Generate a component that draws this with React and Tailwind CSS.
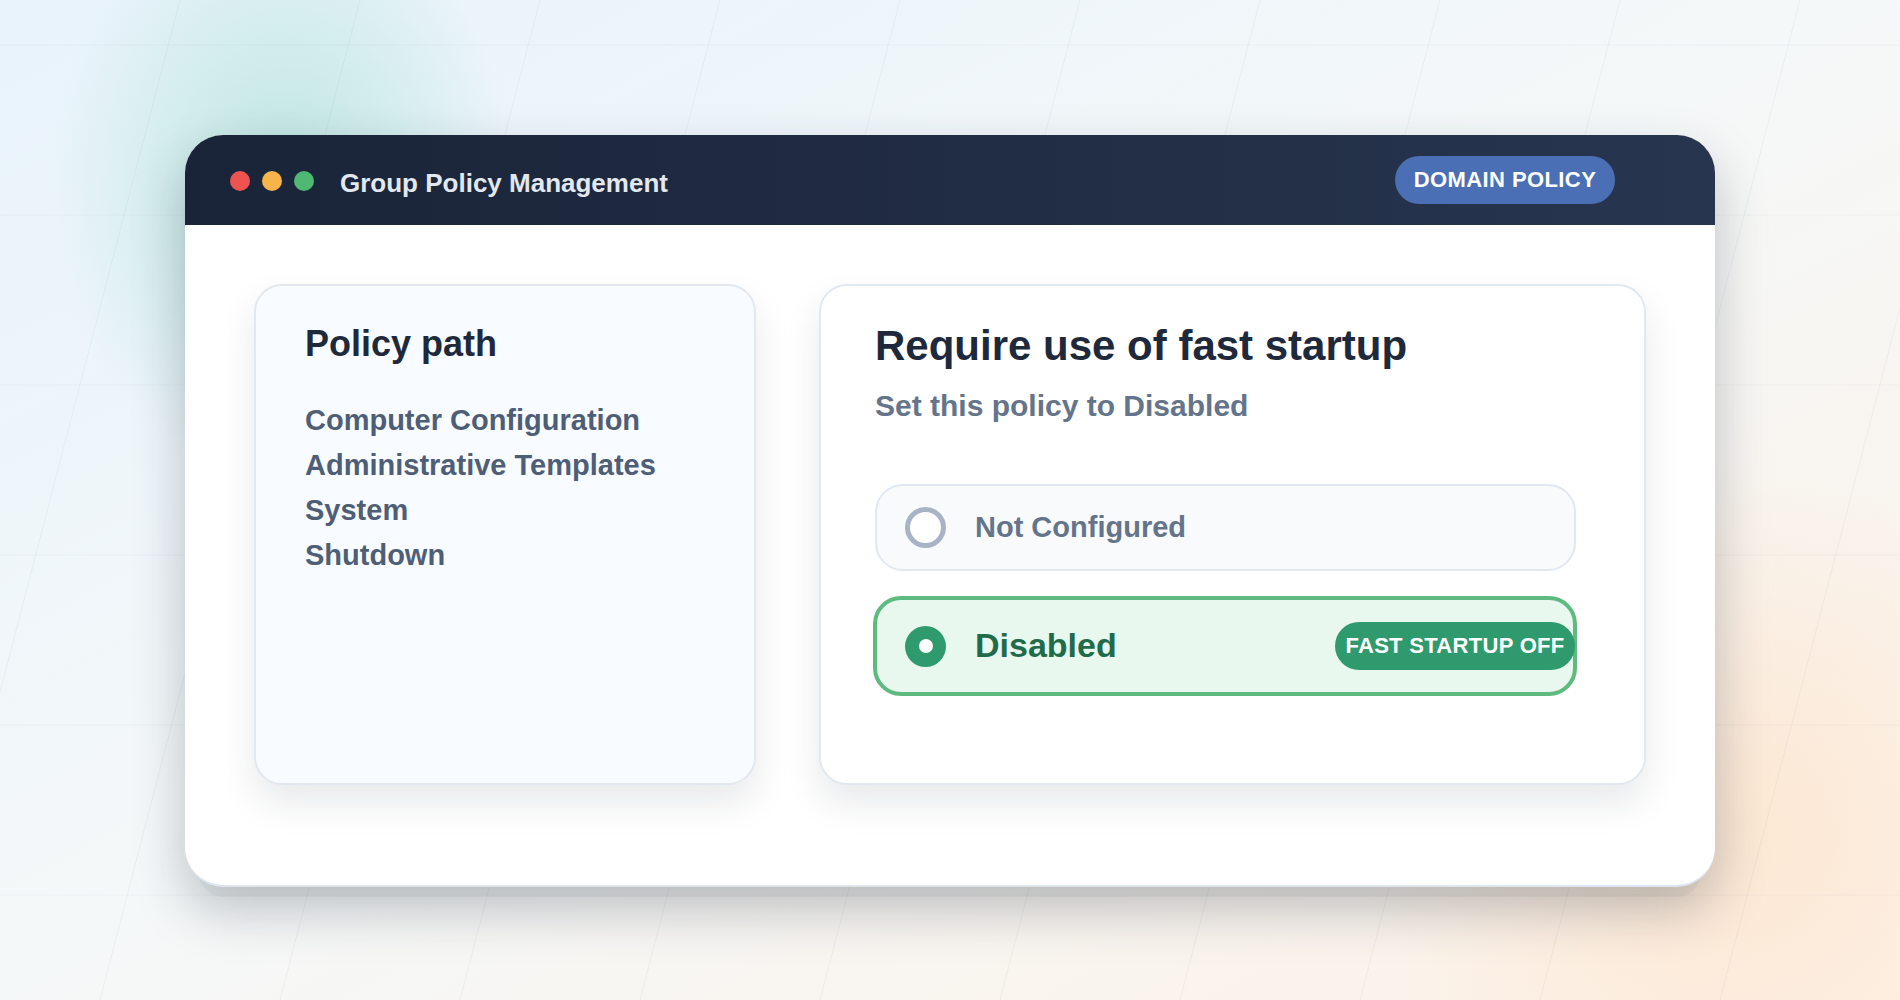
import * as React from 'react'

const FONT = "[font-family:'Liberation_Sans',Arial,sans-serif]"

// decorative slanted grid behind the window
function GridLines() {
  const slanted = Array.from({ length: 13 }, (_, i) => 180 * (i + 1))
  const flat = [45, 215, 385, 555, 725, 895]
  return (
    <svg className="absolute inset-0 h-full w-full" viewBox="0 0 1900 1000" fill="none">
      {flat.map((y) => (
        <line key={y} x1="0" y1={y} x2="1900" y2={y} stroke="#94a3b8" strokeOpacity="0.04" strokeWidth="2" />
      ))}
      {slanted.map((x) => (
        <line key={x} x1={x} y1="0" x2={x - 260} y2="1000" stroke="#94a3b8" strokeOpacity="0.11" strokeWidth="1" />
      ))}
    </svg>
  )
}

function Radio({ checked }) {
  if (checked) {
    return (
      <span className="flex h-[41px] w-[41px] shrink-0 items-center justify-center rounded-full bg-[#2f9a6e]">
        <span className="h-[14px] w-[14px] rounded-full bg-white" />
      </span>
    )
  }
  return <span className="h-[41px] w-[41px] shrink-0 rounded-full border-[5px] border-[#a8b3c6] bg-white" />
}

export default function App() {
  return (
    <div className={`${FONT} relative min-h-[1000px] w-full overflow-hidden bg-linear-to-br from-[#e8f3fc] via-[#f5f8f8] to-[#fdf1e6] px-[185px] pt-[135px]`}>
      <div className="absolute left-[50px] top-[-110px] h-[600px] w-[470px] rounded-full bg-[radial-gradient(closest-side,rgba(175,225,215,0.8),rgba(175,225,215,0))]" />
      <div className="absolute bottom-[-180px] right-[-180px] h-[720px] w-[720px] rounded-full bg-[radial-gradient(closest-side,rgba(253,226,200,0.7),rgba(253,226,200,0))]" />
      <GridLines />

      {/* window */}
      <div className="relative h-[750px] w-[1530px] overflow-hidden rounded-[38px] bg-white shadow-[0_2px_0_#dde5ef,0_26px_0_-14px_rgba(30,41,59,0.04),0_24px_52px_rgba(30,41,59,0.27)]">
        <div className="flex h-[90px] items-center bg-linear-to-r from-[#1a2438] to-[#27354f] pl-[45px] pr-[100px]">
          <div className="flex gap-3 pt-[2px]">
            <span className="h-5 w-5 rounded-full bg-[#ef5350]" />
            <span className="h-5 w-5 rounded-full bg-[#f6b44a]" />
            <span className="h-5 w-5 rounded-full bg-[#4fb872]" />
          </div>
          <div className="ml-[26px] pt-[7px] text-[26px] font-bold text-[#e2e8f0]">Group Policy Management</div>
          <div className="ml-auto flex h-12 w-[220px] items-center justify-center rounded-full bg-[#4a6fb5] pb-[2px] text-[22px] font-bold tracking-[0.4px] text-white">
            DOMAIN POLICY
          </div>
        </div>

        <div className="flex gap-[63px] px-[69px] pt-[59px]">
          {/* policy path */}
          <div className="h-[501px] w-[502px] shrink-0 rounded-[28px] border-2 border-[#e2e8f0] bg-[#f8fbff] pl-[49px] pt-[35px] shadow-[0_18px_36px_rgba(30,41,59,0.1)]">
            <h2 className="text-[36px] font-bold leading-[46px] text-[#1e293b]">Policy path</h2>
            <div className="mt-[31px] text-[29px] font-bold leading-[45px] text-[#4f5e77]">
              <div>Computer Configuration</div>
              <div>Administrative Templates</div>
              <div>System</div>
              <div>Shutdown</div>
            </div>
          </div>

          {/* setting */}
          <div className="h-[501px] flex-1 rounded-[28px] border-2 border-[#e2e8f0] bg-white pl-[54px] pr-[68px] pt-[34px] shadow-[0_18px_36px_rgba(30,41,59,0.1)]">
            <h1 className="text-[42px] font-bold leading-[52px] text-[#1e293b]">Require use of fast startup</h1>
            <p className="mt-[14px] text-[30px] font-bold leading-[40px] text-[#64748b]">Set this policy to Disabled</p>

            <div className="mt-[58px] flex h-[87px] items-center gap-[29px] rounded-[28px] border-2 border-[#e2e8f0] bg-[#f8fafc] pl-[28px]">
              <Radio />
              <span className="text-[29px] font-bold text-[#64748b]">Not Configured</span>
            </div>

            <div className="-ml-[2px] -mr-[1px] mt-[25px] flex h-[100px] items-center gap-[29px] rounded-[28px] border-4 border-[#5fba80] bg-[#e8f8ee] pl-[28px]">
              <Radio checked />
              <span className="pb-[1px] text-[34px] font-bold text-[#1f6b4a]">Disabled</span>
              <span className="-mr-[2px] ml-auto flex h-12 w-[240px] items-center justify-center rounded-full bg-[#2f9a6e] pb-[2px] text-[22px] font-bold tracking-[0.3px] text-white">
                FAST STARTUP OFF
              </span>
            </div>
          </div>
        </div>
      </div>
    </div>
  )
}
